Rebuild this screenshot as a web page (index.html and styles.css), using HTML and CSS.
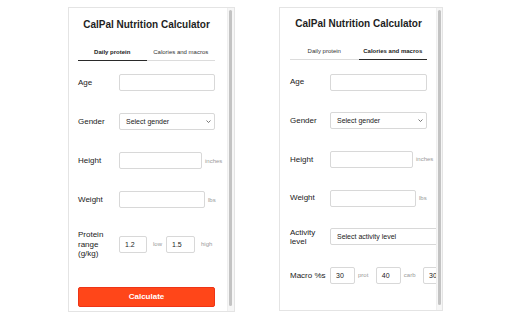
FILE: index.html
```html
<!DOCTYPE html>
<html>
<head>
<meta charset="utf-8">
<link rel="stylesheet" href="styles.css">
</head>
<body>
<div class="stage">
  <div class="panel panel-left">
    <div class="content">
      <h1 class="title">CalPal Nutrition Calculator</h1>
      <div class="tabs">
        <div class="tab active">Daily protein</div>
        <div class="tab">Calories and macros</div>
      </div>
      <div class="form">
        <div class="row">
          <div class="label">Age</div>
          <div class="input w-full"></div>
        </div>
        <div class="row">
          <div class="label">Gender</div>
          <div class="select w-full"><span>Select gender</span>
            <svg class="chev" width="5" height="3" viewBox="0 0 5 3"><polyline points="0.5,0.5 2.5,2.5 4.5,0.5" fill="none" stroke="#555" stroke-width="0.8"/></svg>
          </div>
        </div>
        <div class="row">
          <div class="label">Height</div>
          <div class="input w-height"></div>
          <span class="unit unit-after">inches</span>
        </div>
        <div class="row">
          <div class="label">Weight</div>
          <div class="input w-weight"></div>
          <span class="unit unit-after">lbs</span>
        </div>
        <div class="row">
          <div class="label">Protein<br>range<br>(g/kg)</div>
          <div class="input w-small">1.2</div>
          <span class="unit unit-mid">low</span>
          <div class="input w-small2">1.5</div>
          <span class="unit unit-mid">high</span>
        </div>
        <div class="button">Calculate</div>
      </div>
    </div>
    <div class="scrollbar"><div class="thumb"></div></div>
  </div>

  <div class="panel panel-right">
    <div class="content">
      <h1 class="title">CalPal Nutrition Calculator</h1>
      <div class="tabs">
        <div class="tab">Daily protein</div>
        <div class="tab active">Calories and macros</div>
      </div>
      <div class="form">
        <div class="row">
          <div class="label">Age</div>
          <div class="input w-full2"></div>
        </div>
        <div class="row">
          <div class="label">Gender</div>
          <div class="select w-full2"><span>Select gender</span>
            <svg class="chev" width="5" height="3" viewBox="0 0 5 3"><polyline points="0.5,0.5 2.5,2.5 4.5,0.5" fill="none" stroke="#555" stroke-width="0.8"/></svg>
          </div>
        </div>
        <div class="row">
          <div class="label">Height</div>
          <div class="input w-height"></div>
          <span class="unit unit-after">inches</span>
        </div>
        <div class="row">
          <div class="label">Weight</div>
          <div class="input w-weight"></div>
          <span class="unit unit-after">lbs</span>
        </div>
        <div class="row row-fixed">
          <div class="label label-tight">Activity<br>level</div>
          <div class="select w-activity"><span>Select activity level</span></div>
        </div>
        <div class="row">
          <div class="label">Macro %s</div>
          <div class="input w-macro">30</div>
          <span class="unit unit-macro">prot</span>
          <div class="input w-macro">40</div>
          <span class="unit unit-macro">carb</span>
          <div class="input w-macro">30</div>
        </div>
      </div>
    </div>
    <div class="scrollbar"><div class="thumb"></div></div>
  </div>
</div>
</body>
</html>
```
FILE: styles.css
```css
html, body {
  margin: 0;
  padding: 0;
  background: #ffffff;
}
body {
  font-family: "Liberation Sans", Arial, sans-serif;
  color: #222;
}
.stage {
  display: flex;
  gap: 44px;
  padding: 7px 0 0 68px;
}
.panel {
  display: flex;
  box-sizing: border-box;
  height: 305px;
  border: 1px solid #e4e4e4;
  background: #fff;
  overflow: hidden;
}
.panel-left {
  width: 167px;
}
.panel-right {
  width: 164px;
  height: 304px;
}
.content {
  flex: 1;
  min-width: 0;
  overflow: hidden;
  box-sizing: border-box;
  padding: 11px 12px 0 9px;
}
.panel-right .content {
  padding: 10px 0 0 10px;
}
.panel-right .content > * {
  width: 137px;
}
.scrollbar {
  width: 7px;
  flex: none;
  background: #f6f6f6;
  border-left: 1px solid #efefef;
  box-sizing: border-box;
  padding: 2px 2px 5px 1px;
}
.panel-right .scrollbar {
  width: 6px;
  padding: 2px 1px 5px 1px;
}
.thumb {
  height: 100%;
  background: #c3c3c3;
  border-radius: 2px;
}
.title {
  margin: 0;
  font-size: 10px;
  line-height: 12px;
  font-weight: bold;
  text-align: center;
  color: #1e1e1e;
  white-space: nowrap;
}
.tabs {
  display: flex;
  margin-top: 17px;
}
.tab {
  flex: 1;
  text-align: center;
  font-size: 6px;
  line-height: 8px;
  padding-bottom: 4px;
  border-bottom: 1px solid #dcdcdc;
  color: #333;
  white-space: nowrap;
}
.tab.active {
  font-weight: bold;
  color: #222;
  border-bottom-color: #2a2a2a;
}
.form {
  padding-top: 13px;
}
.panel-right .form {
  padding-top: 13.5px;
}
.row {
  display: flex;
  align-items: center;
  margin-bottom: 22px;
  white-space: nowrap;
}
.panel-right .row {
  margin-bottom: 21.7px;
}
.row-fixed {
  height: 17px;
}
.label {
  width: 41px;
  flex: none;
  font-size: 8px;
  line-height: 9.5px;
  color: #222;
}
.panel-right .label {
  width: 40px;
}
.label-tight {
  line-height: 9px;
}
.input, .select {
  flex: none;
  box-sizing: border-box;
  height: 17px;
  border: 1px solid #d8d8d8;
  border-radius: 2px;
  background: #fff;
  font-size: 7px;
  line-height: 15px;
  padding: 0 5px;
  color: #222;
}
.select {
  display: flex;
  align-items: center;
  justify-content: space-between;
  padding: 0 3px 0 6px;
  line-height: normal;
}
.chev {
  display: block;
}
.w-full { width: 96px; }
.w-full2 { width: 97px; }
.w-height { width: 83px; }
.w-weight { width: 86px; }
.w-small { width: 28px; }
.w-small2 { width: 29px; }
.w-activity { width: 120px; }
.w-macro { width: 25px; }
.unit {
  font-size: 6px;
  color: #9a9a9a;
}
.unit-after {
  margin-left: 3px;
}
.unit-mid {
  margin: 0 4px 0 6px;
}
.unit-macro {
  margin: 0 7.5px 0 3px;
}
.button {
  margin-top: 28.5px;
  height: 20px;
  box-sizing: border-box;
  border: 1px solid #ee3416;
  border-radius: 2px;
  background: #ff4619;
  color: #fff;
  font-size: 8px;
  font-weight: bold;
  line-height: 18px;
  text-align: center;
}
```
